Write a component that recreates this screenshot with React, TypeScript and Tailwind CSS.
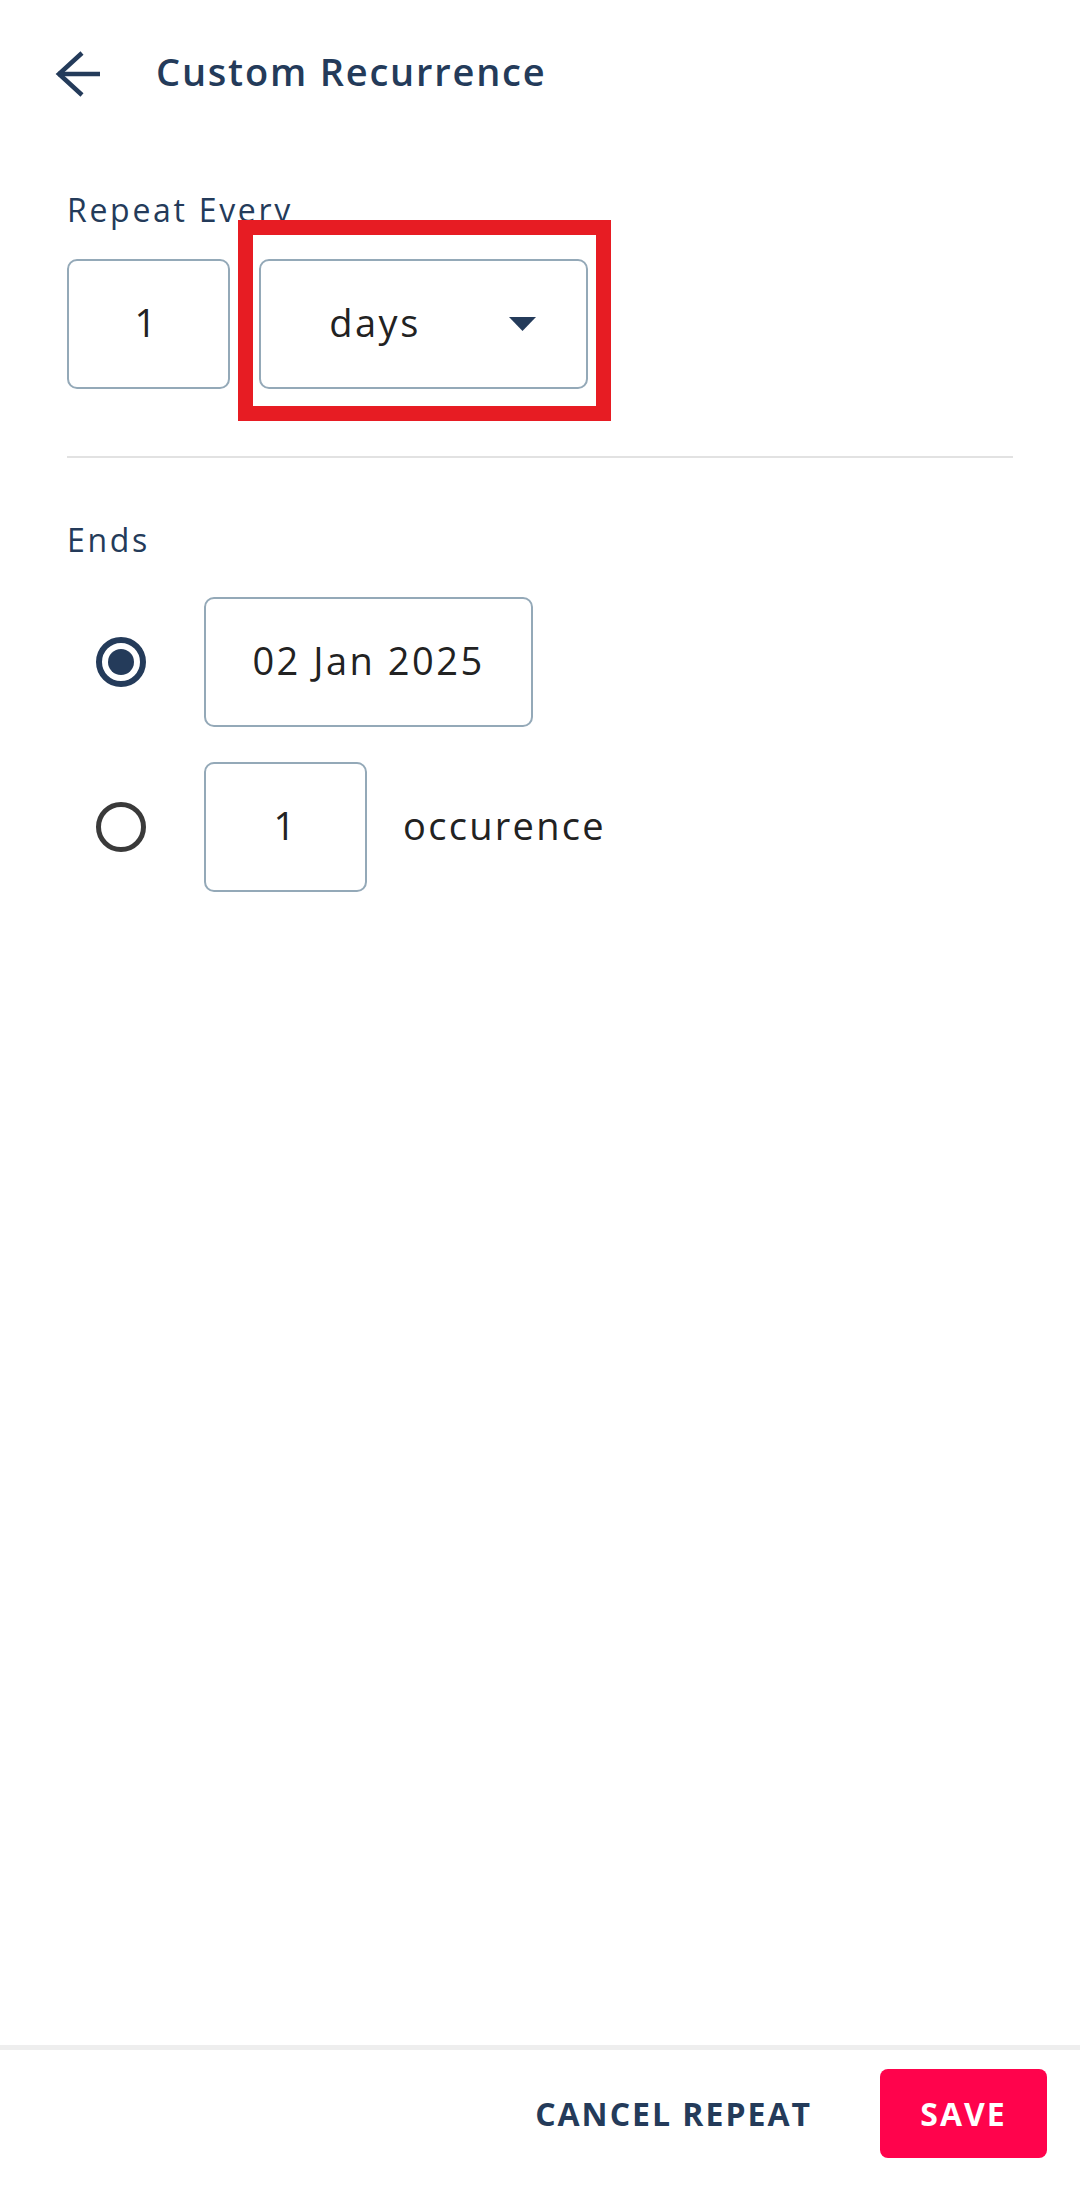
import React from "react";

const FONT = { fontFamily: '"Open Sans", "Noto Sans", sans-serif' };

function BackArrow() {
  return (
    <svg width="46" height="46" viewBox="0 0 46 46" fill="none" className="shrink-0">
      <path d="M3 23H45" stroke="#243b5a" strokeWidth="4.5" />
      <path d="M27 2L4 23L27 44" stroke="#243b5a" strokeWidth="4.5" />
    </svg>
  );
}

function Radio({ checked }: { checked: boolean }) {
  if (checked) {
    return (
      <div className="flex h-[50px] w-[50px] shrink-0 items-center justify-center rounded-full border-[6px] border-[#243b5a]">
        <div className="h-[26px] w-[26px] rounded-full bg-[#243b5a]" />
      </div>
    );
  }
  return <div className="h-[50px] w-[50px] shrink-0 rounded-full border-[5px] border-[#3a3a3a]" />;
}

function Field({ children, className }: { children: React.ReactNode; className: string }) {
  return (
    <div
      className={`flex h-[130px] items-center justify-center rounded-[10px] border-2 border-[#94a9b8] pb-[4px] text-[38px] leading-none tracking-[2.5px] text-[#222222] ${className}`}
    >
      {children}
    </div>
  );
}

export default function App() {
  return (
    <div className="flex min-h-screen flex-col bg-white" style={FONT}>
      {/* header */}
      <header className="flex h-[148px] items-center pl-[55px]">
        <BackArrow />
        <h1 className="ml-[55px] pb-[6px] text-[38px] font-semibold leading-none tracking-[1.8px] text-[#243b5a]">
          Custom Recurrence
        </h1>
      </header>

      <main className="flex-1 px-[67px] pt-[46px]">
        <p className="text-[32px] leading-[32px] tracking-[2.7px] text-[#243b5a]">Repeat Every</p>

        <div className="mt-[33px] flex gap-[29px]">
          <Field className="w-[163px] pr-[4px]">1</Field>
          <div className="relative">
            <div className="flex h-[130px] w-[329px] items-center rounded-[10px] border-2 border-[#94a9b8] pb-[4px] text-[38px] leading-none tracking-[2.5px] text-[#222222]">
              <span className="flex-1 pr-[20px] text-center">days</span>
              <svg width="27" height="14" viewBox="0 0 27 14" className="mr-[50px] mt-[4px] shrink-0">
                <path d="M0 0H27L13.5 14Z" fill="#243b5a" />
              </svg>
            </div>
            {/* highlight */}
            <div className="pointer-events-none absolute -left-[21px] -top-[39px] z-10 h-[201px] w-[373px] border-[15px] border-[#e71c23]" />
          </div>
        </div>

        <div className="mt-[67px] h-[2px] bg-[#e2e2e2]" />

        <p className="mt-[66px] text-[32px] leading-[32px] tracking-[2.7px] text-[#243b5a]">Ends</p>

        <div className="mt-[41px] flex flex-col gap-[35px] pl-[29px]">
          <div className="flex items-center gap-[58px]">
            <Radio checked />
            <Field className="w-[329px]">02 Jan 2025</Field>
          </div>
          <div className="flex items-center gap-[58px]">
            <Radio checked={false} />
            <Field className="w-[163px]">1</Field>
            <span className="-ml-[22px] pb-[4px] text-[38px] leading-none tracking-[2.3px] text-[#222222]">occurence</span>
          </div>
        </div>
      </main>

      {/* footer */}
      <footer className="flex h-[147px] items-start justify-end border-t-[5px] border-[#eeeeee] pr-[33px] pt-[19px]">
        <div className="flex h-[89px] items-center">
          <span className="mr-[68px] text-[32px] font-bold leading-none tracking-[2px] text-[#243b5a]">
            CANCEL REPEAT
          </span>
          <button className="flex h-[89px] w-[167px] items-center justify-center rounded-[8px] bg-[#ff034c] text-[32px] font-bold leading-none tracking-[2px] text-white">
            SAVE
          </button>
        </div>
      </footer>
    </div>
  );
}
